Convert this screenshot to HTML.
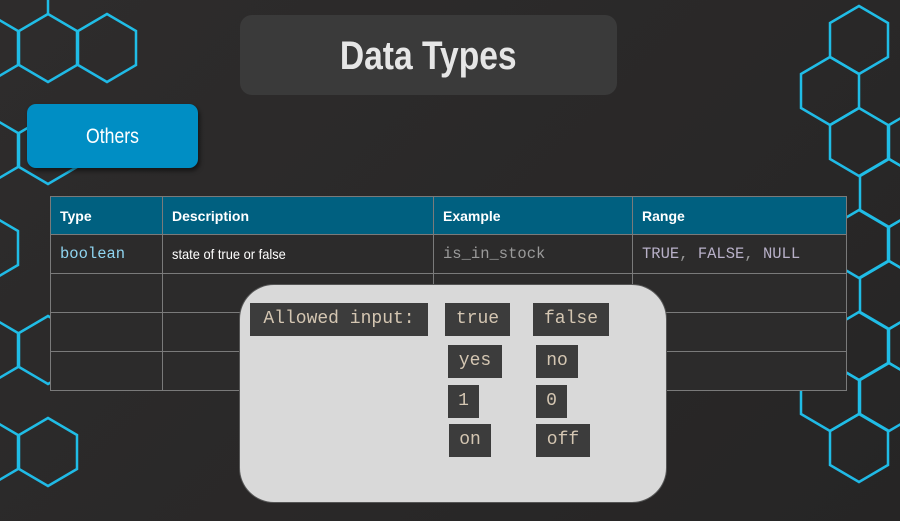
<!DOCTYPE html>
<html><head><meta charset="utf-8"><style>
body{margin:0;width:900px;height:521px;overflow:hidden;background:linear-gradient(135deg,#2e2c2c,#262525);font-family:"Liberation Sans",sans-serif;position:relative}
svg.bg{position:absolute;left:0;top:0}
.title{position:absolute;left:240px;top:15px;width:377px;height:80px;background:#3a3a3a;border-radius:12px;color:#e6e6e6;font-weight:bold;font-size:40px;text-align:center;line-height:82px}
.title span,.btn span{display:inline-block;transform:scaleX(0.84)}
.btn{position:absolute;left:27px;top:104px;width:171px;height:64px;background:#008ec4;border-radius:9px;color:#fff;font-size:21px;text-align:center;line-height:66px;box-shadow:2px 3px 4px rgba(0,0,0,.5)}
table{position:absolute;left:50px;top:196px;border-collapse:collapse;width:797px}
td{border:1.5px solid #7a7a7a;height:38px;padding:0 0 0 9px;font-size:14px;color:#fff;background:#2c2b2b;vertical-align:middle}
tr.h td{background:#006080;font-weight:bold;height:37px;font-size:14px}
.mono{font-family:"Liberation Mono",monospace;font-size:15.5px}
.pop{position:absolute;left:240px;top:285px;width:426px;height:217px;background:#d9d9d9;border-radius:34px;box-shadow:0 0 0 1px #555}
.c{position:absolute;background:#3c3c3c;color:#d4c6b2;font-family:"Liberation Mono",monospace;font-size:18px;height:33px;line-height:33px;text-align:center}
</style></head><body>
<svg class="bg" width="900" height="521">
<defs>
<linearGradient id="g" x1="0" y1="0" x2="0" y2="521" gradientUnits="userSpaceOnUse"><stop offset="0" stop-color="#20bde6"/><stop offset="1" stop-color="#1a82e0"/></linearGradient>
<polygon id="h" points="0,-34 29,-17 29,17 0,34 -29,17 -29,-17"/>
</defs>
<g fill="none" stroke="url(#g)" stroke-width="2.5">
<line x1="48" y1="0" x2="48" y2="14"/>
<use href="#h" x="-11" y="48"/><use href="#h" x="48" y="48"/><use href="#h" x="107" y="48"/>
<use href="#h" x="-11" y="150"/><use href="#h" x="48" y="150"/>
<use href="#h" x="-11" y="248"/>
<use href="#h" x="-11" y="350"/><use href="#h" x="48" y="350"/>
<use href="#h" x="-11" y="452"/><use href="#h" x="48" y="452"/>
<use href="#h" x="859" y="40"/><use href="#h" x="830" y="91"/><use href="#h" x="859" y="142"/><use href="#h" x="918" y="142"/>
<use href="#h" x="889" y="193"/><use href="#h" x="859" y="244"/><use href="#h" x="918" y="244"/>
<use href="#h" x="889" y="295"/><use href="#h" x="859" y="346"/><use href="#h" x="918" y="346"/>
<use href="#h" x="830" y="397"/><use href="#h" x="889" y="397"/><use href="#h" x="859" y="448"/>
</g>
</svg>
<div class="title"><span>Data Types</span></div>
<div class="btn"><span>Others</span></div>
<table>
<colgroup><col style="width:112px"><col style="width:271px"><col style="width:199px"><col></colgroup>
<tr class="h"><td>Type</td><td>Description</td><td>Example</td><td>Range</td></tr>
<tr><td class="mono" style="color:#8fd4f0">boolean</td><td style="font-size:14px"><span style="display:inline-block;transform:scaleX(0.92);transform-origin:left">state of true or false</span></td><td class="mono" style="color:#9a9a9a">is_in_stock</td><td class="mono" style="color:#b8b0c8">TRUE<span style="color:#999">,</span> FALSE<span style="color:#999">,</span> NULL</td></tr>
<tr><td></td><td></td><td></td><td></td></tr>
<tr><td></td><td></td><td></td><td></td></tr>
<tr><td></td><td></td><td></td><td></td></tr>
</table>
<div class="pop"></div>
<div class="c" style="left:250px;top:303px;width:178px">Allowed input:</div>
<div class="c" style="left:445px;top:303px;width:65px">true</div>
<div class="c" style="left:533px;top:303px;width:76px">false</div>
<div class="c" style="left:448px;top:345px;width:54px">yes</div>
<div class="c" style="left:536px;top:345px;width:42px">no</div>
<div class="c" style="left:448px;top:385px;width:31px">1</div>
<div class="c" style="left:536px;top:385px;width:31px">0</div>
<div class="c" style="left:449px;top:424px;width:42px">on</div>
<div class="c" style="left:536px;top:424px;width:54px">off</div>
</body></html>
